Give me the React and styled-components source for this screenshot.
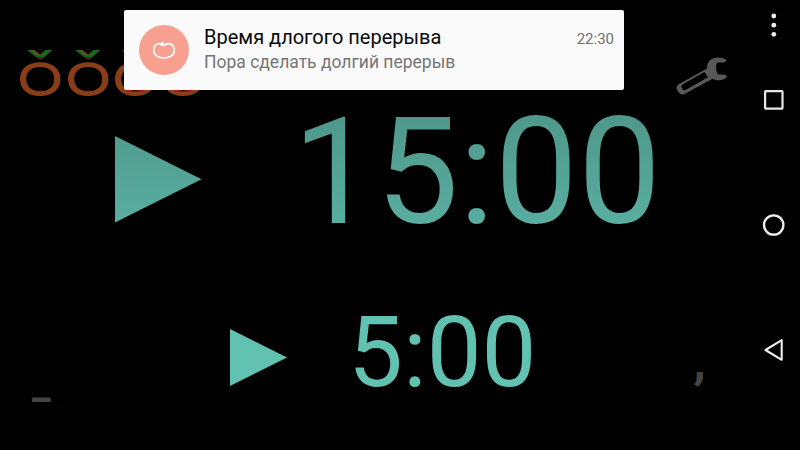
import React from "react";
import styled, { createGlobalStyle } from "styled-components";

const GlobalStyle = createGlobalStyle`
  body { margin: 0; background: #000; }
  * { box-sizing: border-box; }
`;

const Screen = styled.div`
  position: relative;
  display: flex;
  width: 800px;
  height: 450px;
  overflow: hidden;
  background: #000;
  font-family: Roboto, sans-serif;
`;

const Main = styled.main`
  display: flex;
  flex-direction: column;
  width: 748px;
  height: 450px;
`;

const Header = styled.header`
  display: flex;
  justify-content: space-between;
  height: 112px;
  padding: 49px 20px 0 19px;
`;

const Tomatoes = styled.div`
  display: flex;
  gap: 5.5px;
`;

const TomatoSvg = styled.svg`
  display: block;
  width: 42px;
  height: 48px;
`;

const WrenchSvg = styled.svg`
  display: block;
  width: 54px;
  height: 40px;
  margin-top: 7px;
`;

const TimerRow = styled.section`
  display: flex;
  align-items: flex-start;
  height: ${(p) => p.$height}px;
  padding-left: ${(p) => p.$left}px;
`;

const PlaySvg = styled.svg`
  display: block;
  flex: none;
  width: ${(p) => p.$size}px;
  height: ${(p) => p.$size}px;
  margin: ${(p) => p.$top}px ${(p) => p.$gap}px 0 0;
`;

const Time = styled.div`
  font-size: ${(p) => p.$size}px;
  line-height: ${(p) => p.$line}px;
  white-space: nowrap;
  color: transparent;
  background: ${(p) => p.$fill};
  background-clip: text;
  -webkit-background-clip: text;
`;

const Footer = styled.footer`
  display: flex;
  justify-content: space-between;
  height: 50px;
  padding: 0 42px 0 32px;
  color: #444;
`;

const Adjust = styled.span`
  font-size: ${(p) => p.$size}px;
  font-weight: ${(p) => p.$weight};
  line-height: 40px;
  margin-top: ${(p) => p.$top}px;
`;

const NavBar = styled.nav`
  display: flex;
  flex-direction: column;
  align-items: center;
  width: 52px;
  padding-top: 11px;
`;

const NavSvg = styled.svg`
  display: block;
  flex: none;
  width: 28px;
  height: 28px;
  margin-bottom: ${(p) => p.$gap}px;
`;

const Notification = styled.aside`
  position: absolute;
  top: 10px;
  left: 124px;
  display: flex;
  width: 500px;
  height: 80px;
  padding: 15px 10px 0 15px;
  border-radius: 2px;
  background: #fafafa;
`;

const Badge = styled.div`
  display: flex;
  flex: none;
  align-items: center;
  justify-content: center;
  width: 50px;
  height: 50px;
  border-radius: 50%;
  background: #f8a090;
`;

const Message = styled.div`
  flex: 1;
  padding-left: 15px;
`;

const Title = styled.div`
  font-size: 20px;
  line-height: 24px;
  color: #090909;
`;

const Detail = styled.div`
  margin-top: 2px;
  font-size: 17.5px;
  line-height: 23px;
  color: #757575;
`;

const Clock = styled.time`
  padding-top: 4px;
  font-size: 15px;
  line-height: 20px;
  color: #707070;
`;

function Tomato({ ripe }) {
  return (
    <TomatoSvg viewBox="0 0 42 48">
      <path
        fill="#8a3e17"
        fillRule="evenodd"
        d="M21.2 13.3C34 13.3 41.4 20 41.4 30S34 47 21.2 47 1 40 1 30 8.500 13.300 21.200 13.300ZM21.200 18C12.500 18 7.200 22.500 7.200 30S12.500 42.200 21.200 42.200 35.200 37.700 35.200 30 30 18 21.200 18Z"
      />
      {ripe && <path d="M11 40.300Q21 44.700 31.500 40.300" fill="none" stroke="#a3120e" strokeWidth="1.500" />}
      <path d="M8 1H15.500L21 5.600L26.500 1H33.500L25 8.600H17.500Z" fill="#1b651f" />
      <path d="M13.500 1L20.800 6.600" stroke="#8a3e17" strokeWidth="1.500" />
      <path d="M19.500 9.300H24" stroke="#8a3e17" strokeWidth="1" />
    </TomatoSvg>
  );
}

function Wrench() {
  return (
    <WrenchSvg viewBox="674 56 54 40">
      <path
        fill="#585858"
        fillRule="evenodd"
        d="M726.500 60.200L724.500 62.600L717.500 62.500Q715.500 64.500 716 69L717.600 74.300L725.500 74.800L727 76.800C724.500 80 718 81.600 712.500 78.700L684.500 94Q680.500 95.500 678 91.500Q674.500 87 679 84L707 68.500C706.700 61.500 711.500 57.700 718 57.600C722 57.600 725 58.800 726.500 60.200ZM704.500 72L682.500 84.500Q680.500 86.500 682.500 89Q683.500 91.200 686 89.800L708 77.300Z"
      />
    </WrenchSvg>
  );
}

function Play({ size, top, gap, id, from, to }) {
  return (
    <PlaySvg $size={size} $top={top} $gap={gap} viewBox="0 0 86 86">
      <defs>
        <linearGradient id={id} x1="0" y1="0" x2="0" y2="1">
          <stop stopColor={from} />
          <stop offset="1" stopColor={to} />
        </linearGradient>
      </defs>
      <path d="M0 0L86 43L0 86Z" fill={`url(#${id})`} />
    </PlaySvg>
  );
}

export default function App() {
  return (
    <Screen>
      <GlobalStyle />
      <Main>
        <Header>
          <Tomatoes>
            <Tomato />
            <Tomato />
            <Tomato ripe />
            <Tomato ripe />
          </Tomatoes>
          <Wrench />
        </Header>
        <TimerRow $height={203} $left={115}>
          <Play size={86.500} top={24} gap={91} id="long" from="#519d90" to="#59ae9f" />
          <Time $size={148} $line={122} $fill="linear-gradient(#4e978a, #5ab0a1)">15:00</Time>
        </TimerRow>
        <TimerRow $height={85} $left={230}>
          <Play size={57} top={14} gap={61} id="short" from="#62c2b2" to="#62c2b2" />
          <Time $size={97.800} $line={76} $fill="#62c2b2">5:00</Time>
        </TimerRow>
        <Footer>
          <Adjust $size={42} $weight={700} $top={-37}>_</Adjust>
          <Adjust $size={47} $weight={900} $top={-58}>,</Adjust>
        </Footer>
      </Main>
      <NavBar>
        <NavSvg $gap={47} viewBox="0 0 28 28" fill="#efefef">
          <circle cx="13.800" cy="5" r="2.400" />
          <circle cx="13.800" cy="14.200" r="2.400" />
          <circle cx="13.800" cy="23.300" r="2.400" />
        </NavSvg>
        <NavSvg $gap={97} viewBox="0 0 28 28" fill="none" stroke="#e6e6e6">
          <rect x="5.100" y="5.200" width="17.400" height="17.400" rx=".6" strokeWidth="2.200" />
        </NavSvg>
        <NavSvg $gap={97} viewBox="0 0 28 28" fill="none" stroke="#eee">
          <circle cx="13.700" cy="14" r="9.700" strokeWidth="2.300" />
        </NavSvg>
        <NavSvg $gap={0} viewBox="0 0 28 28" fill="none" stroke="#eee">
          <path d="M21.700 4.200V23.800L5.500 14Z" strokeWidth="2.100" strokeLinejoin="round" />
        </NavSvg>
      </NavBar>
      <Notification>
        <Badge>
          <svg width="24" height="22" viewBox="0 0 24 22" fill="none" stroke="#fff">
            <path
              d="M12 6.600C7.500 2.600 1.700 5.300 1.700 11.200C1.700 16.800 7 19 12 19S22.300 16.800 22.300 11.200C22.300 5.300 16.500 2.600 12 6.600Z"
              strokeWidth="1.600"
            />
            <path d="M12 7L10.300 2.400M8.300 5.800L12 6.500L15 4.200" strokeWidth="1.400" />
          </svg>
        </Badge>
        <Message>
          <Title>Время длогого перерыва</Title>
          <Detail>Пора сделать долгий перерыв</Detail>
        </Message>
        <Clock>22:30</Clock>
      </Notification>
    </Screen>
  );
}
